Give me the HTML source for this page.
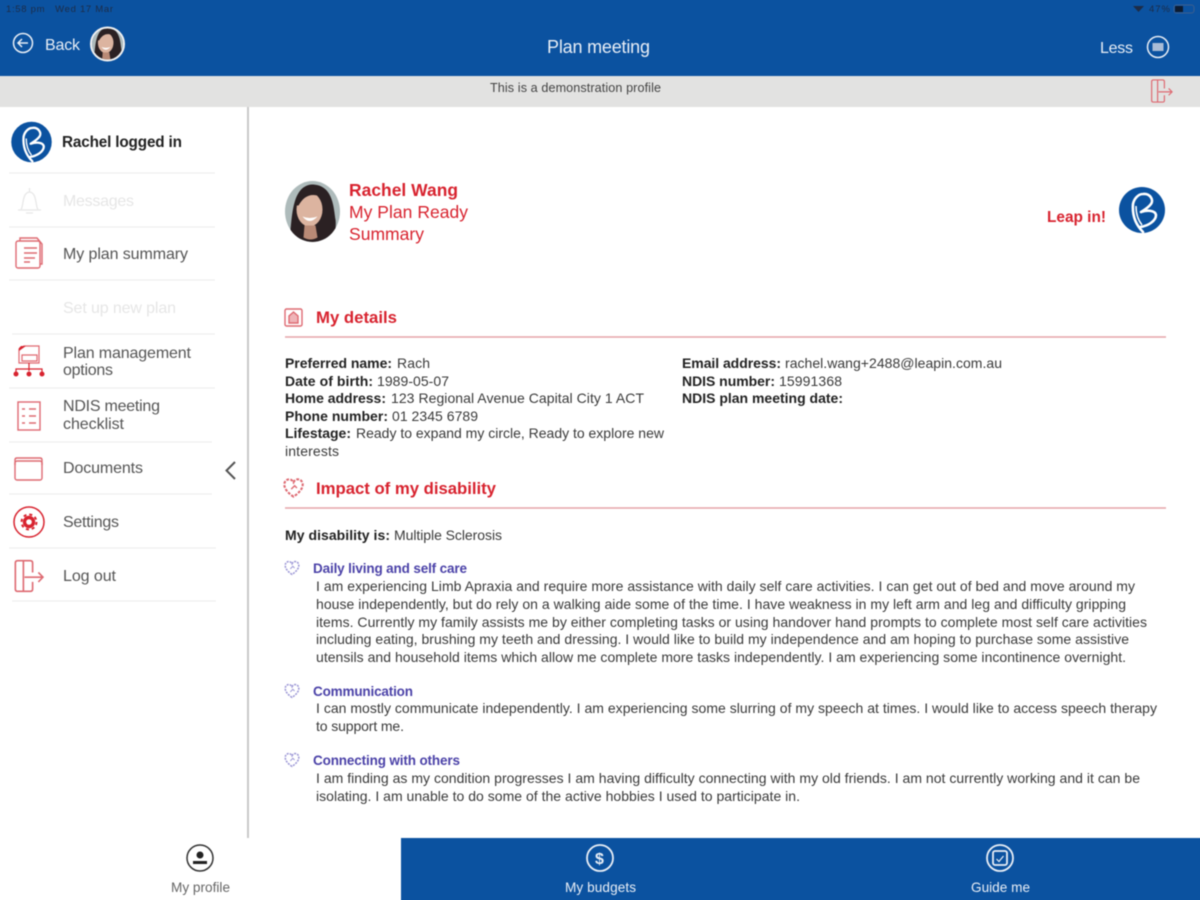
<!DOCTYPE html>
<html lang="en">
<head>
<meta charset="utf-8">
<title>Plan meeting</title>
<style>
html,body{margin:0;padding:0;width:1200px;height:900px;overflow:hidden;background:#fff}
svg{display:block;overflow:visible;filter:blur(.45px)}
text{font-family:"Liberation Sans",Arial,sans-serif;font-size:14px;fill:#3a3a3a}
.b{font-weight:700;fill:#222}
.s{font-size:16px;fill:#555}
.off{font-size:16px;fill:#e6e6e6}
.r{fill:#d8232f}
.h{font-size:16.750px;font-weight:700;fill:#d8232f}
.p{font-weight:700;font-size:13.500px;fill:#4b42a8}
.w{fill:#e8eef6}
.ic{fill:none;stroke:#de6a72;stroke-width:1.4}
.ln{stroke:#efefef;stroke-width:1.2}
</style>
</head>
<body>
<svg width="1200" height="900" viewBox="0 0 1200 900" xmlns="http://www.w3.org/2000/svg">
<defs>
<clipPath id="c1"><circle cx="107.500" cy="44" r="15.500"/></clipPath>
<clipPath id="c2"><ellipse cx="312.500" cy="211.500" rx="27.500" ry="30.500"/></clipPath>
<g id="face">
<rect x="-30" y="-32" width="60" height="64" fill="#aebbbb"/>
<path d="M-23 26C-20 10-22-25-1-27 20-27 21-6 23 8 24 16 22 26 18 32H-18Z" fill="#2b2123"/>
<ellipse cx="-3" cy="-2" rx="13" ry="17" fill="#dcb4a0"/>
<path d="M-14-6C-9-15-2-19 8-15 6-24-14-23-16-6Z" fill="#2b2123"/>
<path d="M-10 5Q-3 14 5 5Q-3 8-10 5Z" fill="#fff"/>
<path d="M-8 14H3L5 26Q-2 30-9 26Z" fill="#b98a76"/>
</g>
<g id="logo">
<circle r="23" fill="#0b52a0"/>
<path d="M1 22C-6 15-10 6-9-6-8-11-4-16 1-16 8-17 12-10 9-6 6-2 2 0-1 2 5 0 13 0 14 5 14 11 6 16-2 17" fill="none" stroke="#fff" stroke-width="2.600" stroke-linecap="round" stroke-linejoin="round"/>
<path d="M-6-4C-6 4-4 10 0 15" fill="none" stroke="#fff" stroke-width="1.500"/>
</g>
<g id="heart">
<path d="M0 7.500C-4 5-8 1-8-3-8-6-5.500-8-3-7.500-1.500-7.200-.5-6 0-5 .5-6 1.500-7.200 3-7.500 5.500-8 8-6 8-3 8 1 4 5 0 7.500Z" fill="none" stroke-dasharray="2.400 1.200" stroke-width="1.800"/>
<path d="M-2 1 1-2 3 0" fill="none" stroke-width="1.200"/>
</g>
<g id="exit">
<path d="M-3 1H13M9-3 13 1 9 5"/>
<path d="M4-3V-11Q4-13 2-13H-9Q-11-13-11-11V11Q-11 13-9 13H2Q4 13 4 11V5"/>
<path d="M-4-13V13"/>
</g>
</defs>

<rect x="-10" y="-10" width="1220" height="920" fill="#fff"/>
<rect x="-10" y="-10" width="1220" height="86" fill="#0b52a0"/>
<rect x="-10" y="76" width="1220" height="31" fill="#e2e2e1"/>
<rect x="247" y="107" width="2" height="731" fill="#c9c9c9"/>
<rect x="401" y="838" width="809" height="72" fill="#0b52a0"/>

<!-- status -->
<text x="6" y="12" style="font-size:9.500px;fill:#1d2c47" textLength="107">1:58 pm&#160;&#160;&#160;Wed 17 Mar</text>
<path d="M1133 6H1144L1138.500 12Z" fill="#1d2c47"/>
<text x="1149" y="12" style="font-size:9.500px;fill:#1d2c47" textLength="21">47%</text>
<rect x="1174" y="5" width="20" height="8" rx="2.500" fill="none" stroke="#3d5f8f" stroke-width="1"/>
<rect x="1175" y="6" width="8" height="6" fill="#0d1b30"/>

<!-- header -->
<circle cx="23" cy="43" r="9.500" fill="none" stroke="#e8eef6" stroke-width="1.500"/>
<path d="M28 43H18M22 39 18 43 22 47" fill="none" stroke="#e8eef6" stroke-width="1.500"/>
<text class="w" x="45" y="50" style="font-size:16px" textLength="35">Back</text>
<g clip-path="url(#c1)"><use href="#face" transform="translate(107.500 44) scale(.6)"/></g>
<circle cx="107.500" cy="44" r="16.500" fill="none" stroke="#f1f1f1" stroke-width="2"/>
<text class="w" x="547" y="53" style="font-size:18px" textLength="103">Plan meeting</text>
<text class="w" x="1100" y="53" style="font-size:16px" textLength="33">Less</text>
<circle cx="1158" cy="47" r="10.500" fill="none" stroke="#e8eef6" stroke-width="1.500"/>
<rect x="1152.500" y="43" width="11" height="8" fill="#a9bcd6"/>

<!-- banner -->
<text x="490" y="92" style="font-size:12.600px;fill:#444" textLength="171">This is a demonstration profile</text>
<g class="ic" transform="translate(1161 91) scale(.85)"><use href="#exit"/></g>

<!-- sidebar -->
<use href="#logo" transform="translate(31.500 142) scale(.88)"/>
<text class="b" x="62" y="147" style="font-size:15.300px" textLength="120">Rachel logged in</text>
<g class="ln">
<line x1="9" x2="215" y1="173" y2="173"/><line x1="9" x2="215" y1="227" y2="227"/><line x1="9" x2="215" y1="280" y2="280"/><line x1="12" x2="215" y1="334" y2="334"/><line x1="9" x2="215" y1="388" y2="388"/><line x1="9" x2="212" y1="442" y2="442"/><line x1="9" x2="212" y1="494" y2="494"/><line x1="9" x2="216" y1="548" y2="548"/><line x1="12" x2="216" y1="601" y2="601"/>
</g>
<path d="M18 210H41M21 210C24 204 22 193 29.500 192 37 193 35 204 38 210M29.500 188V192M26 213H33" fill="none" stroke="#e8e8e8" stroke-width="1.300"/>
<text class="off" x="63" y="206" textLength="71">Messages</text>

<g class="ic">
<path d="M20 238H37L42 244V264H20Z"/><rect x="16" y="241" width="24" height="27" rx="2" fill="#fff"/>
<path d="M24 248H37M24 253H37M24 258H35M24 262H30"/>
</g>
<text class="s" x="63" y="259" textLength="125">My plan summary</text>
<text class="off" x="63" y="313" textLength="113">Set up new plan</text>

<g class="ic" style="stroke:#d8232f;stroke-width:1.200">
<path d="M19 363V349L24 346H39V363ZM22 355H37V361H22Z" stroke="#e06a72"/>
<path d="M29 363V371M16 374V369H42V374"/>
</g>
<path d="M19 351 26 346H21L19 348Z" fill="#d8232f"/>
<circle cx="16" cy="374" r="2.500" fill="#d8232f"/><circle cx="29" cy="374" r="2.500" fill="#d8232f"/><circle cx="42" cy="374" r="2.500" fill="#d8232f"/>
<text class="s" x="63" y="358" textLength="128">Plan management</text>
<text class="s" x="63" y="375" textLength="50">options</text>

<g class="ic">
<rect x="18" y="402" width="22" height="28"/>
<path d="M22 409H25M29 409H36M22 416H25M29 416H36M22 423H25M29 423H36"/>
</g>
<text class="s" x="63" y="411" textLength="97">NDIS meeting</text>
<text class="s" x="63" y="429" textLength="61">checklist</text>

<g class="ic">
<rect x="15" y="461" width="27" height="19" rx="2"/>
<path d="M15 465V460Q15 458 17 458H40Q42 458 42 460V465"/>
</g>
<text class="s" x="63" y="473" textLength="80">Documents</text>
<path d="M235 462 226.500 470.500 235 479" fill="none" stroke="#555" stroke-width="2"/>

<circle cx="29" cy="522" r="15" fill="none" stroke="#d8232f" stroke-width="1.500"/>
<circle cx="29" cy="522" r="7.500" fill="none" stroke="#d8232f" stroke-width="2" stroke-dasharray="3 2.900"/>
<circle cx="29" cy="522" r="4.500" fill="none" stroke="#d8232f" stroke-width="3.400"/>
<text class="s" x="63" y="527" textLength="56">Settings</text>

<g class="ic" transform="translate(28 576)"><use href="#exit" transform="scale(1.150 1.180)"/></g>
<text class="s" x="63" y="581" textLength="53">Log out</text>

<!-- profile head -->
<g clip-path="url(#c2)"><use href="#face" transform="translate(312.500 211.500)"/></g>
<text class="r" x="349" y="196" style="font-size:17.400px;font-weight:700" textLength="109">Rachel Wang</text>
<text class="r" x="349" y="218" style="font-size:17.500px" textLength="119">My Plan Ready</text>
<text class="r" x="349" y="240" style="font-size:17.500px" textLength="75">Summary</text>
<text class="r" x="1047" y="222" style="font-size:15.400px;font-weight:700" textLength="59">Leap in!</text>
<use href="#logo" transform="translate(1142 210)"/>

<!-- my details -->
<g class="ic"><rect x="285" y="309" width="17" height="17" rx="1.500"/><path d="M289 323V316L293.500 312 298 316V323Z" fill="#efb4b8"/></g>
<text class="h" x="316" y="323" textLength="81">My details</text>
<line x1="285" x2="1166" y1="337" y2="337" stroke="#e6a5a9" stroke-width="1.500"/>

<text class="b" x="285" y="368" textLength="107">Preferred name:</text><text x="397" y="368" textLength="33">Rach</text>
<text class="b" x="285" y="386" textLength="88">Date of birth:</text><text x="377" y="386" textLength="72">1989-05-07</text>
<text class="b" x="285" y="403" textLength="101">Home address:</text><text x="391" y="403" textLength="253">123 Regional Avenue Capital City 1 ACT</text>
<text class="b" x="285" y="421" textLength="103">Phone number:</text><text x="392" y="421" textLength="86">01 2345 6789</text>
<text class="b" x="285" y="438" textLength="66">Lifestage:</text><text x="356" y="438" textLength="308">Ready to expand my circle, Ready to explore new</text>
<text x="285" y="456" textLength="54">interests</text>
<text class="b" x="682" y="368" textLength="99">Email address:</text><text x="785" y="368" textLength="217">rachel.wang+2488@leapin.com.au</text>
<text class="b" x="682" y="386" textLength="93">NDIS number:</text><text x="779" y="386" textLength="63">15991368</text>
<text class="b" x="682" y="403" textLength="161">NDIS plan meeting date:</text>

<!-- impact -->
<use href="#heart" transform="translate(293.500 488) scale(1.150)" stroke="#de6a72"/>
<text class="h" x="316" y="494" textLength="180">Impact of my disability</text>
<line x1="285" x2="1166" y1="508" y2="508" stroke="#e6a5a9" stroke-width="1.500"/>
<text class="b" x="285" y="540" textLength="105">My disability is:</text><text x="394" y="540" textLength="108">Multiple Sclerosis</text>

<use href="#heart" transform="translate(292 568) scale(.85)" stroke="#9d98d6"/>
<text class="p" x="313" y="573" textLength="154">Daily living and self care</text>
<text x="316" y="591" textLength="819">I am experiencing Limb Apraxia and require more assistance with daily self care activities. I can get out of bed and move around my</text>
<text x="316" y="609" textLength="810">house independently, but do rely on a walking aide some of the time. I have weakness in my left arm and leg and difficulty gripping</text>
<text x="316" y="627" textLength="831">items. Currently my family assists me by either completing tasks or using handover hand prompts to complete most self care activities</text>
<text x="316" y="644" textLength="813">including eating, brushing my teeth and dressing. I would like to build my independence and am hoping to purchase some assistive</text>
<text x="316" y="662" textLength="810">utensils and household items which allow me complete more tasks independently. I am experiencing some incontinence overnight.</text>

<use href="#heart" transform="translate(292 691) scale(.85)" stroke="#9d98d6"/>
<text class="p" x="313" y="696" textLength="100">Communication</text>
<text x="316" y="713" textLength="841">I can mostly communicate independently. I am experiencing some slurring of my speech at times. I would like to access speech therapy</text>
<text x="316" y="731" textLength="88">to support me.</text>

<use href="#heart" transform="translate(292 760) scale(.85)" stroke="#9d98d6"/>
<text class="p" x="313" y="765" textLength="147">Connecting with others</text>
<text x="316" y="783" textLength="824">I am finding as my condition progresses I am having difficulty connecting with my old friends. I am not currently working and it can be</text>
<text x="316" y="801" textLength="484">isolating. I am unable to do some of the active hobbies I used to participate in.</text>

<!-- bottom tabs -->
<circle cx="200" cy="858" r="13" fill="none" stroke="#333" stroke-width="1.500"/>
<circle cx="200" cy="855" r="3.500" fill="#222"/><rect x="193" y="861" width="14" height="3" fill="#222"/>
<text x="171" y="892" style="font-size:13.600px;fill:#666" textLength="59">My profile</text>

<circle cx="600" cy="858" r="13" fill="none" stroke="#e8eef6" stroke-width="1.800"/>
<text x="595" y="864" style="font-size:16px;font-weight:700;fill:#e8eef6">$</text>
<text class="w" x="565" y="892" style="font-size:13.600px" textLength="71">My budgets</text>

<circle cx="1000" cy="858" r="13" fill="none" stroke="#e8eef6" stroke-width="1.800"/>
<rect x="993" y="851" width="14" height="14" rx="2" fill="none" stroke="#e8eef6" stroke-width="1.800"/>
<path d="M996.500 859 999 861.500 1003.500 856" fill="none" stroke="#e8eef6" stroke-width="1.200"/>
<text class="w" x="971" y="892" style="font-size:13.600px" textLength="59">Guide me</text>
</svg>
</body>
</html>
